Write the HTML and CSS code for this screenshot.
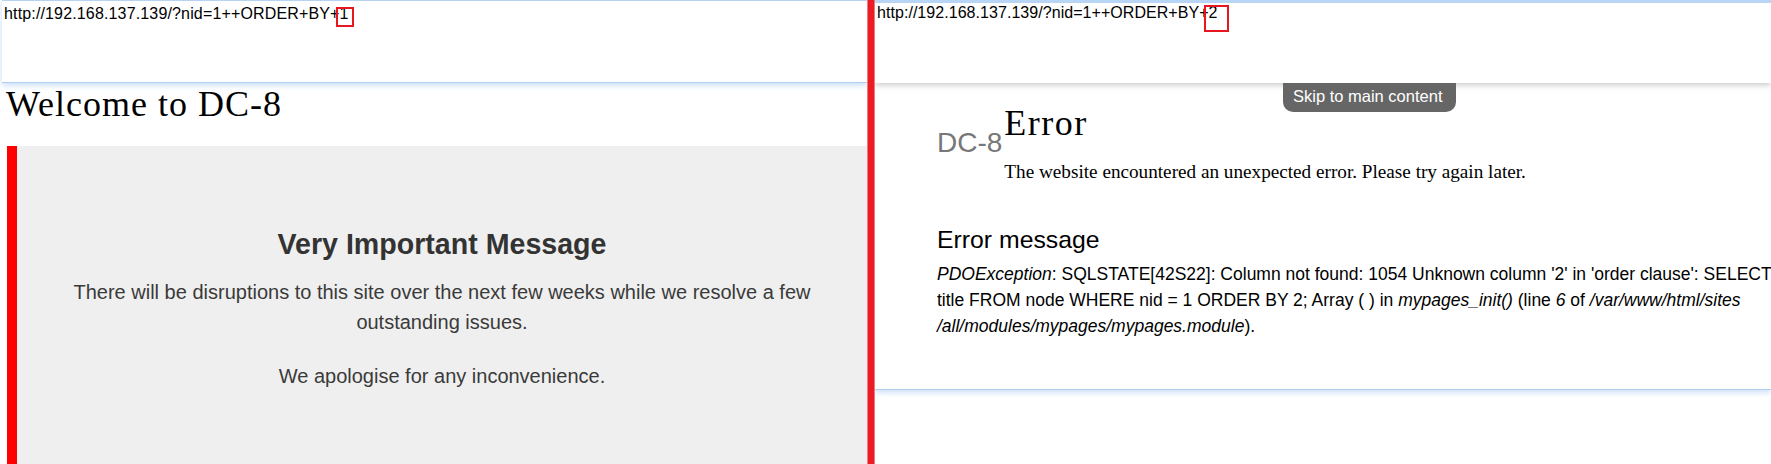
FILE: index.html
```html
<!DOCTYPE html>
<html lang="en">
<head>
<meta charset="utf-8">
<title>DC-8 ORDER BY test</title>
<link rel="stylesheet" href="styles.css">
</head>
<body>
<div class="screen">
  <section class="pane pane-left">
    <div class="urlbar urlbar-left">http://192.168.137.139/?nid=1++ORDER+BY+<span class="mark mark-left">1</span></div>
    <h1 class="site-title">Welcome to DC-8</h1>
    <div class="notice">
      <h2 class="notice-title">Very Important Message</h2>
      <p class="notice-text">There will be disruptions to this site over the next few weeks while we resolve a few outstanding issues.</p>
      <p class="notice-text">We apologise for any inconvenience.</p>
    </div>
  </section>
  <div class="divider"></div>
  <section class="pane pane-right">
    <div class="urlbar urlbar-right">http://192.168.137.139/?nid=1++ORDER+BY+<span class="mark mark-right">2</span></div>
    <a class="skip-link" href="#main">Skip to main content</a>
    <div class="card" id="main">
      <div class="head">
        <div class="brand">DC-8</div>
        <div class="head-text">
          <h1 class="err-title">Error</h1>
          <p class="err-lead">The website encountered an unexpected error. Please try again later.</p>
        </div>
      </div>
      <h2 class="msg-title">Error message</h2>
      <p class="msg-text"><em>PDOException</em>: SQLSTATE[42S22]: Column not found: 1054 Unknown column '2' in 'order clause': SELECT<br>title FROM node WHERE nid = 1 ORDER BY 2; Array ( ) in <em>mypages_init()</em> (line <em>6</em> of <em>/var/www/html/sites<br>/all/modules/mypages/mypages.module</em>).</p>
    </div>
  </section>
</div>
</body>
</html>
```
FILE: styles.css
```css
html, body {
  margin: 0;
  padding: 0;
  background: #ffffff;
}

.screen {
  display: flex;
  width: 1771px;
  height: 464px;
  overflow: hidden;
}

.pane {
  position: relative;
  overflow: hidden;
  background: #ffffff;
}

.pane-left {
  flex: 0 0 867px;
}

.pane-right {
  flex: 1 1 auto;
}

.divider {
  flex: 0 0 8px;
  background: #ec1c24;
  box-shadow: inset 1px 0 0 #f27a7f, inset -1px 0 0 #f27a7f;
}

.urlbar {
  position: relative;
  z-index: 1;
  box-sizing: border-box;
  height: 83px;
  background: #ffffff;
  font-family: "Liberation Sans", Arial, sans-serif;
  font-size: 16px;
  line-height: 20px;
  letter-spacing: 0.15px;
  color: #000000;
  white-space: nowrap;
}

.urlbar-left {
  margin-left: 2px;
  padding: 3px 0 0 2px;
  border-top: 1px solid #b7d3f4;
  border-bottom: 1px solid #b0cdf2;
  box-shadow: 0 2px 6px rgba(150, 190, 240, 0.55);
}

.urlbar-right {
  padding: 0 0 0 2px;
  letter-spacing: 0.05px;
  border-top: 3px solid #b9d5f5;
  box-shadow: 0 2px 6px rgba(0, 0, 0, 0.22);
}

.mark {
  position: relative;
}

.mark::after {
  content: "";
  position: absolute;
  box-sizing: border-box;
  border: 2px solid #e8161f;
}

.mark-left::after {
  left: -4px;
  top: 2px;
  width: 18px;
  height: 20px;
}

.mark-right::after {
  left: -5px;
  top: 1px;
  width: 25px;
  height: 27px;
}

.site-title {
  margin: 1px 0 22px;
  padding-left: 6px;
  font-family: "Liberation Serif", Georgia, serif;
  font-weight: normal;
  font-size: 36px;
  line-height: 40px;
  letter-spacing: 1px;
  color: #000000;
}

.notice {
  height: 400px;
  margin-left: 7px;
  padding: 82px 40px 0;
  border-left: 10px solid #ff0000;
  background: #efefef;
  text-align: center;
  color: #333333;
  font-family: "Liberation Sans", Arial, sans-serif;
}

.notice-title {
  margin: 0 0 17px;
  font-size: 28.6px;
  line-height: 32px;
  font-weight: bold;
}

.notice-text {
  margin: 0 0 24px;
  font-size: 20px;
  line-height: 30px;
  color: #3a3a3a;
}

.skip-link {
  position: absolute;
  z-index: 2;
  top: 83px;
  left: 408px;
  padding: 2px 13px 5px 10px;
  background: #666666;
  border-radius: 0 0 10px 10px;
  color: #ffffff;
  font-family: "Liberation Sans", Arial, sans-serif;
  font-size: 16.5px;
  line-height: 22px;
  text-decoration: none;
}

.card {
  box-sizing: border-box;
  height: 307px;
  padding: 20px 0 0 62px;
  background: #ffffff;
  border-bottom: 1px solid #b0cdf2;
  box-shadow: 0 2px 6px rgba(150, 190, 240, 0.55);
  color: #000000;
}

.head {
  display: flex;
  align-items: flex-start;
}

.brand {
  margin: 24px 2px 0 0;
  font-family: "Liberation Sans", Arial, sans-serif;
  font-size: 28px;
  line-height: 32px;
  color: #777777;
}

.err-title {
  margin: 0;
  font-family: "Liberation Serif", Georgia, serif;
  font-weight: normal;
  font-size: 36px;
  line-height: 40px;
  letter-spacing: 1.5px;
}

.err-lead {
  margin: 17px 0 0;
  font-family: "Liberation Serif", Georgia, serif;
  font-size: 19.2px;
  line-height: 24px;
}

.msg-title {
  margin: 42px 0 7px;
  font-family: "Liberation Sans", Arial, sans-serif;
  font-weight: normal;
  font-size: 24.8px;
  line-height: 28px;
}

.msg-text {
  margin: 0;
  font-family: "Liberation Sans", Arial, sans-serif;
  font-size: 17.5px;
  line-height: 26px;
  white-space: nowrap;
}
```
